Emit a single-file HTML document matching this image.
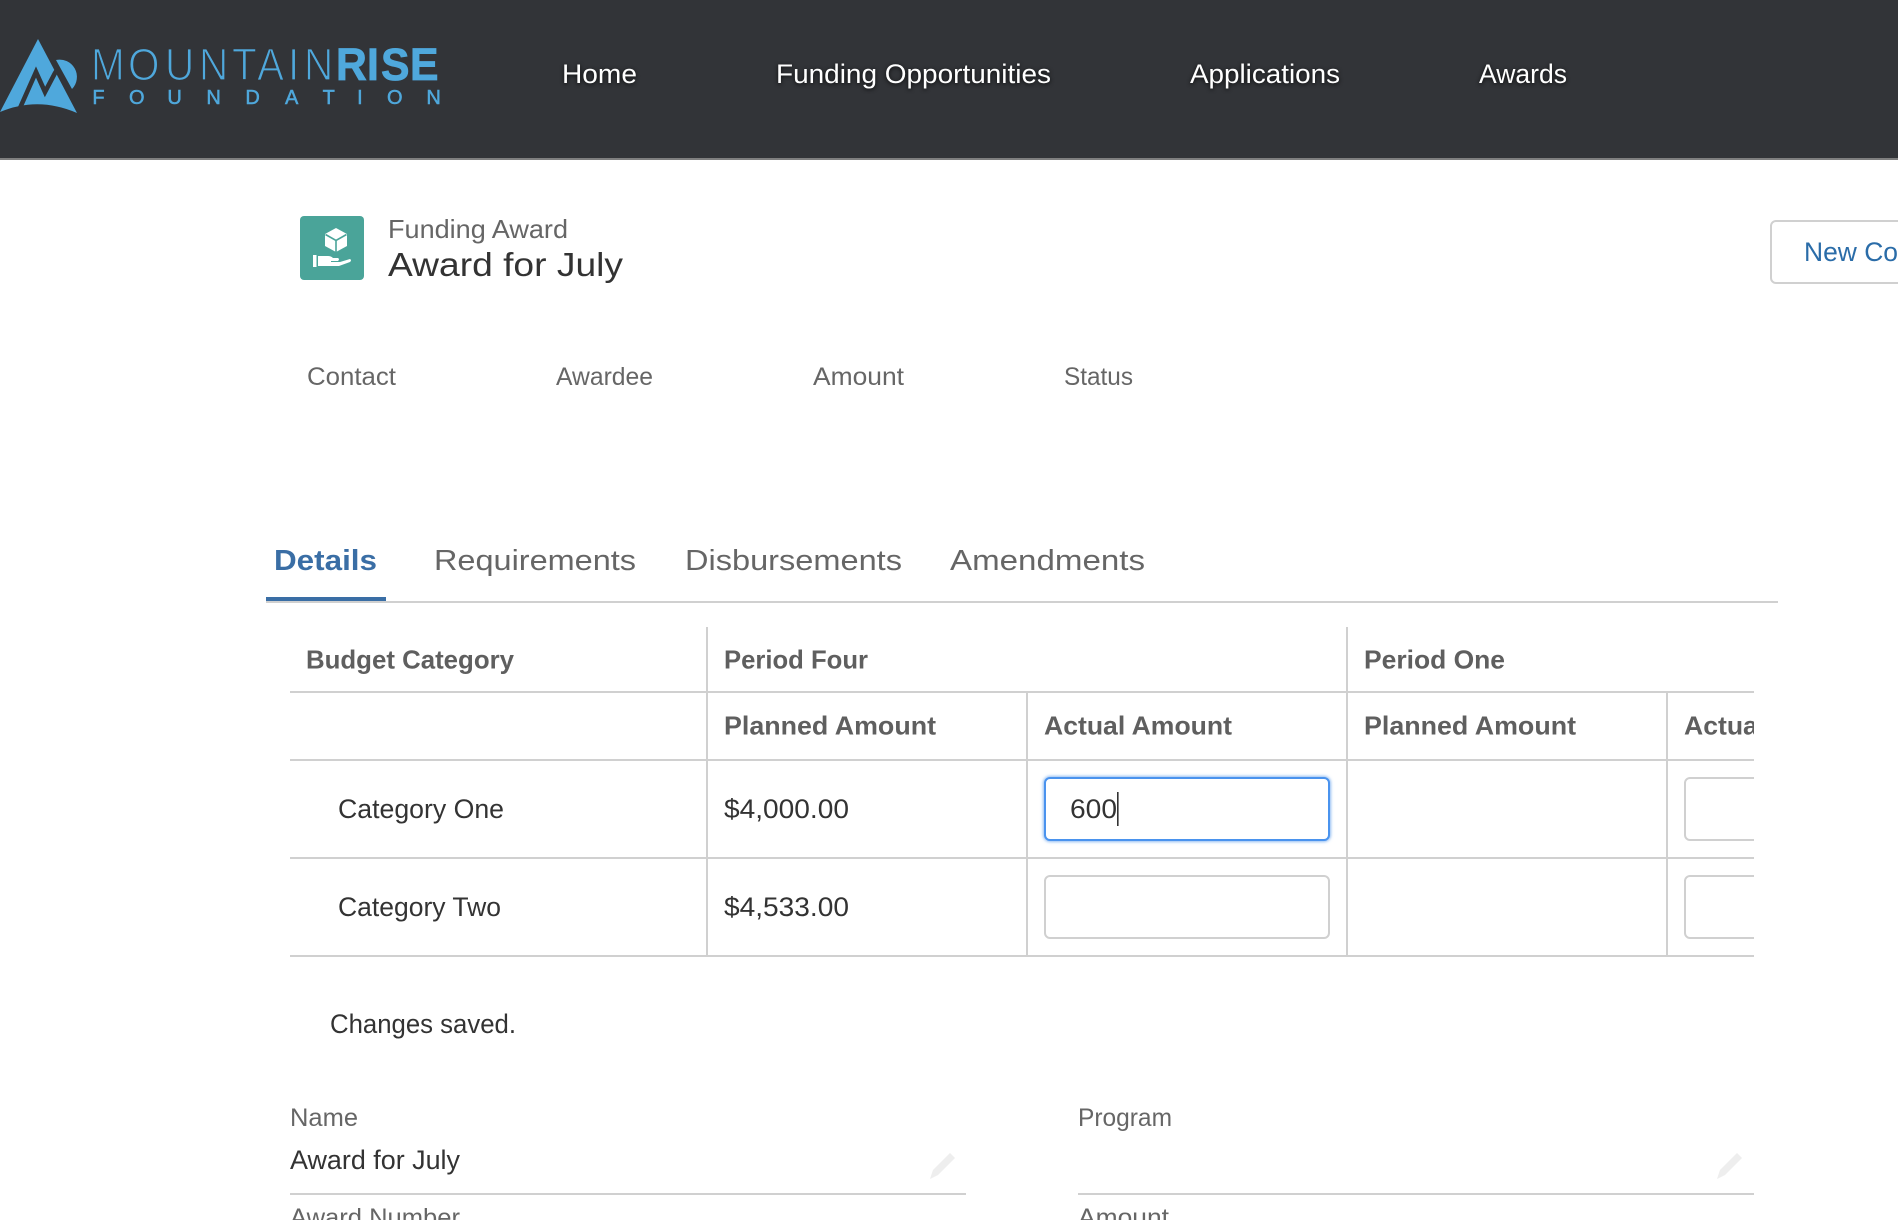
<!DOCTYPE html>
<html><head><meta charset="utf-8"><title>Award for July</title>
<style>
html,body{margin:0;padding:0;background:#fff;width:1898px;height:1220px;overflow:hidden}
svg{display:block;position:absolute;left:0;top:0}
text{font-family:"Liberation Sans",sans-serif;fill:#333}
.nav{fill:#fff;font-size:27px;filter:drop-shadow(0 1px 2px rgba(0,0,0,.8))}
.gray{fill:#666}
.th{fill:#5f5f5f;font-weight:bold;font-size:26px}
.lb{fill:#666;font-size:25px}
.td{font-size:27px}
.tab{fill:#666;font-size:29px}
</style></head><body>
<svg width="1898" height="1220" viewBox="0 0 1898 1220" xmlns="http://www.w3.org/2000/svg">
<defs><clipPath id="tb"><rect x="280" y="620" width="1474" height="345"/></clipPath>
<filter id="gl" x="-5%" y="-20%" width="110%" height="140%"><feGaussianBlur stdDeviation="1.5"/></filter></defs>

<!-- header -->
<rect width="1898" height="158" fill="#323438"/>
<rect y="158" width="1898" height="2" fill="#7f7f7f"/>
<!-- logo -->
<path d="M38 39 L77 113 Q38 96 0 112 Z" fill="#4fa8dc"/>
<polyline points="20,108 36,72 45,92 55,73 66,56" fill="none" stroke="#323438" stroke-width="4.6" stroke-linejoin="miter"/>
<path d="M56 60 A17.3 17.3 0 0 1 72 89 Z" fill="#4fa8dc"/>
<text transform="translate(0 80) scale(.9 1)" x="101.1 142.2 183.3 221.1 257.8 285.6 320 337.8" y="0" font-size="45" style="fill:#4fa8dc;stroke:#323438;stroke-width:1.3">MOUNTAIN</text>
<text transform="translate(0 80) scale(.95 1)" x="353.7 386.3 401 431.6" y="0" font-size="45" font-weight="bold" style="fill:#4fa8dc;stroke:#4fa8dc;stroke-width:.8">RISE</text>
<text x="92.4 129 167.4 206.4 245.4 285 322.6 357.1 387 426.4" y="104" font-size="20" style="fill:#4fa8dc;stroke:#4fa8dc;stroke-width:.5">FOUNDATION</text>
<!-- nav -->
<text class="nav" x="562" y="83" textLength="75" lengthAdjust="spacingAndGlyphs">Home</text>
<text class="nav" x="776" y="83" textLength="275" lengthAdjust="spacingAndGlyphs">Funding Opportunities</text>
<text class="nav" x="1190" y="83" textLength="150" lengthAdjust="spacingAndGlyphs">Applications</text>
<text class="nav" x="1479" y="83" textLength="88" lengthAdjust="spacingAndGlyphs">Awards</text>

<!-- record header -->
<rect x="300" y="216" width="64" height="64" rx="4" fill="#4aa499"/>
<path d="M336 228 L347 234 L347 246 L336 252 L325 246 L325 234 Z" fill="#fff"/>
<path d="M325.5 234.5 L336 240.5 L346.5 234.5 M336 240.5 V252" fill="none" stroke="#4aa499" stroke-width="1.6"/>
<rect x="313" y="255" width="3.5" height="12" fill="#fff"/>
<path d="M318 256 H328 Q331 256 333 258 H338 Q340 259 338 261 H331 V262 H340 L350 259 Q352 260 350 262 L339 266 H318 Z" fill="#fff"/>
<text x="388" y="238" font-size="26" class="gray" textLength="180" lengthAdjust="spacingAndGlyphs">Funding Award</text>
<text x="388" y="276" font-size="33" textLength="235" lengthAdjust="spacingAndGlyphs">Award for July</text>
<rect x="1771" y="221" width="140" height="62" rx="5" fill="#fff" stroke="#d0d0d0" stroke-width="2"/>
<text x="1804" y="261" font-size="27" textLength="94" lengthAdjust="spacingAndGlyphs" style="fill:#2a6ca8">New Co</text>

<text class="lb" x="307" y="385" textLength="89" lengthAdjust="spacingAndGlyphs">Contact</text>
<text class="lb" x="556" y="385" textLength="97" lengthAdjust="spacingAndGlyphs">Awardee</text>
<text class="lb" x="813" y="385" textLength="91" lengthAdjust="spacingAndGlyphs">Amount</text>
<text class="lb" x="1064" y="385" textLength="69" lengthAdjust="spacingAndGlyphs">Status</text>

<!-- tabs -->
<text class="tab" x="274" y="570" font-weight="bold" textLength="103" lengthAdjust="spacingAndGlyphs" style="fill:#3a6ea5">Details</text>
<text class="tab" x="434" y="570" textLength="202" lengthAdjust="spacingAndGlyphs">Requirements</text>
<text class="tab" x="685" y="570" textLength="217" lengthAdjust="spacingAndGlyphs">Disbursements</text>
<text class="tab" x="950" y="570" textLength="195" lengthAdjust="spacingAndGlyphs">Amendments</text>
<rect x="266" y="601" width="1512" height="2" fill="#d0d0d0"/>
<rect x="266" y="597" width="120" height="4" fill="#3a6ea5"/>

<!-- table -->
<g clip-path="url(#tb)">
<g fill="#d0d0d0">
<rect x="290" y="691" width="1464" height="2"/>
<rect x="290" y="759" width="1464" height="2"/>
<rect x="290" y="857" width="1464" height="2"/>
<rect x="290" y="955" width="1464" height="2"/>
<rect x="706" y="627" width="2" height="330"/>
<rect x="1346" y="627" width="2" height="330"/>
<rect x="1026" y="692" width="2" height="265"/>
<rect x="1666" y="692" width="2" height="265"/>
</g>
<text class="th" x="306" y="668.5" textLength="208" lengthAdjust="spacingAndGlyphs">Budget Category</text>
<text class="th" x="724" y="668.5" textLength="144" lengthAdjust="spacingAndGlyphs">Period Four</text>
<text class="th" x="1364" y="668.5" textLength="141" lengthAdjust="spacingAndGlyphs">Period One</text>
<text class="th" x="724" y="734.5" textLength="212" lengthAdjust="spacingAndGlyphs">Planned Amount</text>
<text class="th" x="1044" y="734.5" textLength="188" lengthAdjust="spacingAndGlyphs">Actual Amount</text>
<text class="th" x="1364" y="734.5" textLength="212" lengthAdjust="spacingAndGlyphs">Planned Amount</text>
<text class="th" x="1684" y="734.5" textLength="188" lengthAdjust="spacingAndGlyphs">Actual Amount</text>

<text class="td" x="338" y="818" textLength="166" lengthAdjust="spacingAndGlyphs">Category One</text>
<text class="td" x="724" y="818" textLength="125" lengthAdjust="spacingAndGlyphs">$4,000.00</text>
<text class="td" x="338" y="916" textLength="163" lengthAdjust="spacingAndGlyphs">Category Two</text>
<text class="td" x="724" y="916" textLength="125" lengthAdjust="spacingAndGlyphs">$4,533.00</text>

<rect x="1045" y="778" width="284" height="62" rx="5" fill="none" stroke="#6aa5ee" stroke-width="3" filter="url(#gl)"/>
<rect x="1045" y="778" width="284" height="62" rx="5" fill="#fff" stroke="#4a93ee" stroke-width="2"/>
<text class="td" x="1070" y="818" textLength="47" lengthAdjust="spacingAndGlyphs">600</text>
<rect x="1117" y="792" width="1.6" height="34" fill="#333"/>
<rect x="1045" y="876" width="284" height="62" rx="5" fill="#fff" stroke="#d0d0d0" stroke-width="2"/>
<rect x="1685" y="778" width="284" height="62" rx="5" fill="#fff" stroke="#d0d0d0" stroke-width="2"/>
<rect x="1685" y="876" width="284" height="62" rx="5" fill="#fff" stroke="#d0d0d0" stroke-width="2"/>
</g>

<text class="td" x="330" y="1033" textLength="186" lengthAdjust="spacingAndGlyphs">Changes saved.</text>

<!-- fields -->
<text class="lb" x="290" y="1126" textLength="68" lengthAdjust="spacingAndGlyphs">Name</text>
<text class="td" x="290" y="1169" textLength="170" lengthAdjust="spacingAndGlyphs">Award for July</text>
<rect x="290" y="1193" width="676" height="2" fill="#d0d0d0"/>
<text class="lb" x="1078" y="1126" textLength="94" lengthAdjust="spacingAndGlyphs">Program</text>
<rect x="1078" y="1193" width="676" height="2" fill="#d0d0d0"/>
<text class="lb" x="290" y="1226" textLength="170" lengthAdjust="spacingAndGlyphs">Award Number</text>
<text class="lb" x="1078" y="1226" textLength="91" lengthAdjust="spacingAndGlyphs">Amount</text>
<g fill="#eeeeee">
<path d="M930 1179 L933 1170 L950 1153 L955 1158 L938 1175 Z"/>
<path d="M1717 1179 L1720 1170 L1737 1153 L1742 1158 L1725 1175 Z"/>
</g>
</svg>
</body></html>
